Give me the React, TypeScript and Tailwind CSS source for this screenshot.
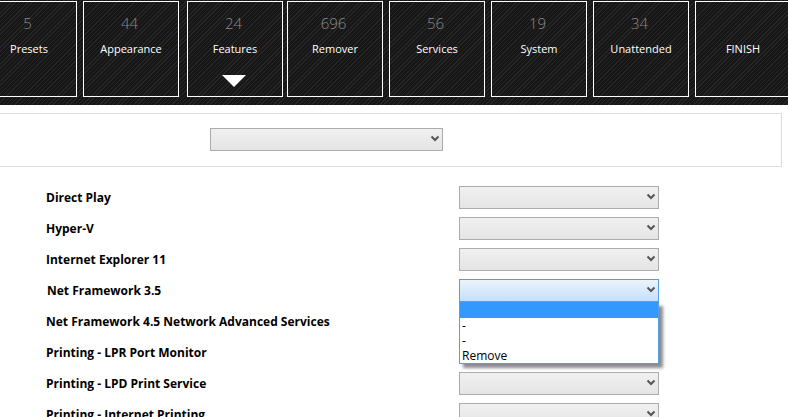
import React from 'react';

const tiles = [
  { count: '5', label: 'Presets', className: 'ml-[-19px] mr-[6px]' },
  { count: '44', label: 'Appearance', className: 'mr-[8px]' },
  { count: '24', label: 'Features', className: 'mr-[4px]', active: true },
  { count: '696', label: 'Remover', className: 'mr-[6px]' },
  { count: '56', label: 'Services', className: 'mr-[6px]' },
  { count: '19', label: 'System', className: 'mr-[6px]' },
  { count: '34', label: 'Unattended', className: 'mr-[6px]' },
  { count: '', label: 'FINISH', className: '' },
];

const rows = [
  { label: 'Direct Play' },
  { label: 'Hyper-V' },
  { label: 'Internet Explorer 11' },
  { label: 'Net Framework 3.5', open: true },
  { label: 'Net Framework 4.5 Network Advanced Services' },
  { label: 'Printing - LPR Port Monitor' },
  { label: 'Printing - LPD Print Service' },
  { label: 'Printing - Internet Printing' },
];

const Chevron = () => (
  <svg className="absolute right-[3px] top-[7px] pointer-events-none" width="10" height="8" viewBox="0 0 10 8">
    <path d="M1.5 1.5 L5 5 L8.5 1.5" fill="none" stroke="#555" strokeWidth="2" />
  </svg>
);

const Select = ({ className }: { className: string }) => (
  <div className={`relative h-[23px] ${className}`}>
    <select className="block w-full h-full appearance-none border border-[#acacac] bg-gradient-to-b from-[#f0f0f0] to-[#e5e5e5] outline-none" />
    <Chevron />
  </div>
);

const OpenSelect = () => (
  <div className="relative w-[200px] h-[23px]">
    <div className="h-full border border-[#569de5] bg-gradient-to-b from-[#ebf4fc] to-[#c4e0fc]" />
    <Chevron />
    {/* options list */}
    <div className="absolute left-0 top-[23px] w-full z-10 border border-[#569de5] border-t-0 bg-white shadow-[4px_4px_3px_rgba(0,0,0,0.45)] text-[12px] leading-[15px] text-black">
      <div className="h-[16px] bg-[#3399ff]" />
      <div className="h-[15px] pl-[2px]">-</div>
      <div className="h-[15px] pl-[2px]">-</div>
      <div className="h-[15px] pl-[2px]">Remove</div>
    </div>
  </div>
);

export default function App() {
  return (
    <div className="w-[788px] h-[417px] overflow-hidden bg-white font-['Open_Sans',sans-serif]">
      {/* Top nav */}
      <div className="flex h-[105px] pt-[1px] overflow-hidden bg-[#1c1c1c] bg-[repeating-linear-gradient(135deg,#262626_0px,#262626_1px,#161616_1px,#161616_3px)]">
        {tiles.map((t) => (
          <div
            key={t.label}
            className={`relative shrink-0 w-[96px] h-[96px] border border-white flex flex-col items-center ${t.className}`}
          >
            <div className="h-[20px] mt-[11px] pr-[3px] text-[15px] leading-[20px] font-light text-[#8a8a8a]">{t.count}</div>
            <div className="mt-[8px] text-[11px] leading-[16px] text-white">{t.label}</div>
            {t.active && (
              <div className="absolute left-[34px] top-[73px] w-0 h-0 border-l-[12px] border-r-[12px] border-t-[12px] border-l-transparent border-r-transparent border-t-white" />
            )}
          </div>
        ))}
      </div>

      {/* Preset panel */}
      <div className="mt-[8px] w-[782px] h-[54px] border border-[#dddddd] border-l-0 pt-[14px] pl-[210px]">
        <Select className="w-[233px]" />
      </div>

      {/* Feature rows */}
      <div className="mt-[19px] flex flex-col gap-[8px]">
        {rows.map((r) => (
          <div key={r.label} className="flex items-center h-[23px]">
            <div className={`w-[459px] text-[12px] font-bold text-black ${r.open ? 'pl-[47px]' : 'pl-[46px]'}`}>{r.label}</div>
            {r.open ? <OpenSelect /> : <Select className="w-[200px]" />}
          </div>
        ))}
      </div>
    </div>
  );
}
